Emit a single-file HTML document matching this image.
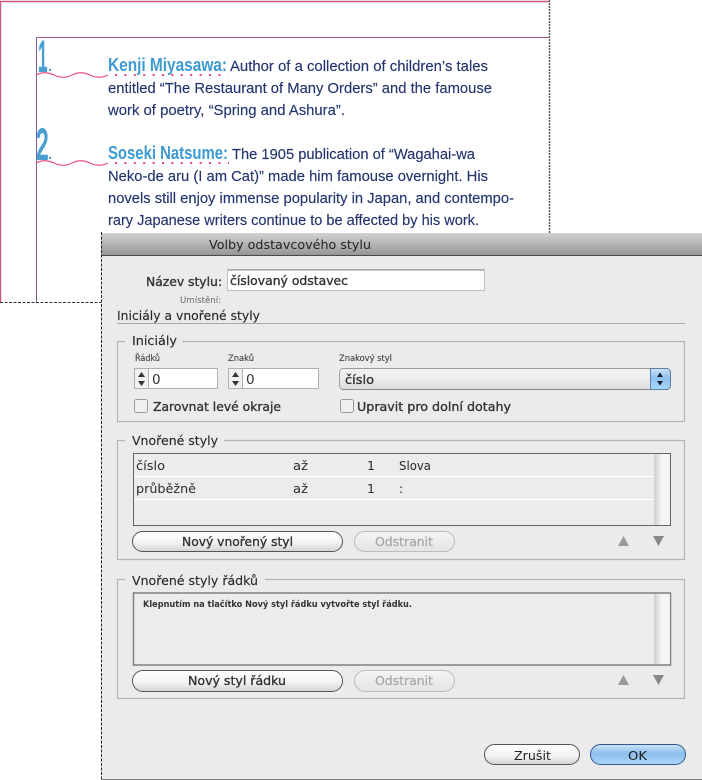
<!DOCTYPE html>
<html lang="cs">
<head>
<meta charset="utf-8">
<title>Volby odstavcového stylu</title>
<style>
html,body{margin:0;padding:0;background:#fff;width:702px;height:780px;overflow:hidden}
svg{display:block;filter:blur(.3px)}
.b{font-family:"Liberation Sans",sans-serif;font-size:15px;fill:#24356f;stroke:#24356f;stroke-width:.15}
.h{font-family:"Liberation Sans",sans-serif;font-weight:bold;font-size:18px;fill:#3d9ad2}
.n{font-family:"Liberation Sans",sans-serif;fill:#4a9fd0;stroke:#4a9fd0;stroke-width:2}
.p{font-family:"Liberation Sans",sans-serif;font-weight:bold;font-size:15px;fill:#4a9fd0}
.u{font-family:"DejaVu Sans",sans-serif;font-size:12.5px;fill:#2b2b2b}
.s{font-family:"DejaVu Sans",sans-serif;font-size:8.5px;fill:#3f3f3f;stroke:#3f3f3f;stroke-width:.12}
.m{font-family:"DejaVu Sans",sans-serif;font-size:12.5px;fill:#333;stroke:#333;stroke-width:.35}
.d{font-family:"DejaVu Sans",sans-serif;font-size:12.5px;fill:#a6a6a6;stroke:#a6a6a6;stroke-width:.2}
</style>
</head>
<body>
<svg width="702" height="780" viewBox="0 0 702 780" xmlns="http://www.w3.org/2000/svg">
<defs>
<linearGradient id="tb" x1="0" y1="0" x2="0" y2="1"><stop offset="0" stop-color="#d2d2d2"/><stop offset="1" stop-color="#969696"/></linearGradient>
<linearGradient id="pill" x1="0" y1="0" x2="0" y2="1"><stop offset="0" stop-color="#ffffff"/><stop offset=".55" stop-color="#f3f3f3"/><stop offset="1" stop-color="#d4d4d4"/></linearGradient>
<linearGradient id="pilld" x1="0" y1="0" x2="0" y2="1"><stop offset="0" stop-color="#f4f4f4"/><stop offset="1" stop-color="#e4e4e4"/></linearGradient>
<linearGradient id="blue" x1="0" y1="0" x2="0" y2="1"><stop offset="0" stop-color="#cfe4f8"/><stop offset=".45" stop-color="#8dbfee"/><stop offset="1" stop-color="#a9d8fa"/></linearGradient>
<linearGradient id="sel" x1="0" y1="0" x2="0" y2="1"><stop offset="0" stop-color="#f2f2f2"/><stop offset=".5" stop-color="#ececec"/><stop offset="1" stop-color="#dcdcdc"/></linearGradient>
<linearGradient id="sb" x1="0" y1="0" x2="1" y2="0"><stop offset="0" stop-color="#cfcfcf"/><stop offset=".5" stop-color="#f6f6f6"/><stop offset="1" stop-color="#f2f2f2"/></linearGradient>
</defs>

<!-- page behind the dialog -->
<line x1="0" y1="1.5" x2="549" y2="1.5" stroke="#d0587a" stroke-width="1.4"/>
<line x1="0.5" y1="1" x2="0.5" y2="302" stroke="#d0587a" stroke-width="1.4"/>
<line x1="549.5" y1="0" x2="549.5" y2="233" stroke="#555" stroke-width="1.4" stroke-dasharray="2 1"/>
<line x1="0" y1="302.5" x2="101" y2="302.5" stroke="#333" stroke-width="1" stroke-dasharray="3 1.5"/>
<line x1="36" y1="37.5" x2="549" y2="37.5" stroke="#a2588f" stroke-width="1"/>
<line x1="36.5" y1="37" x2="36.5" y2="302" stroke="#7d5ba6" stroke-width="1"/>

<text class="n" font-size="43" transform="translate(38 71) scale(.4 1)">1</text>
<text class="p" x="48" y="71">.</text>
<text class="n" font-size="43" transform="translate(36 159) scale(.52 1)">2</text>
<text class="p" x="48" y="159">.</text>

<path d="M36 75c6-3 12-3 18 0s12 3 18 0 12-3 18 0 12 3 18 0" fill="none" stroke="#e8507f" stroke-width="1.2"/>
<path d="M36 163c6-3 12-3 18 0s12 3 18 0 12-3 18 0 12 3 18 0" fill="none" stroke="#e8507f" stroke-width="1.2"/>
<line x1="115" y1="75" x2="228" y2="75" stroke="#e8457a" stroke-width="2" stroke-dasharray="2 7.4"/>
<line x1="115" y1="163" x2="229" y2="163" stroke="#e8457a" stroke-width="2" stroke-dasharray="2 7.4"/>

<text class="h" x="108" y="71" textLength="119" lengthAdjust="spacingAndGlyphs">Kenji Miyasawa:</text>
<text class="b" x="230" y="71" textLength="258" lengthAdjust="spacingAndGlyphs">Author of a collection of children’s tales</text>
<text class="b" x="108" y="93" textLength="384" lengthAdjust="spacingAndGlyphs">entitled “The Restaurant of Many Orders” and the famouse</text>
<text class="b" x="108" y="115" textLength="237" lengthAdjust="spacingAndGlyphs">work of poetry, “Spring and Ashura”.</text>
<text class="h" x="108" y="159" textLength="120" lengthAdjust="spacingAndGlyphs">Soseki Natsume:</text>
<text class="b" x="232" y="159" textLength="243" lengthAdjust="spacingAndGlyphs">The 1905 publication of “Wagahai-wa</text>
<text class="b" x="108" y="181" textLength="380" lengthAdjust="spacingAndGlyphs">Neko-de aru (I am Cat)” made him famouse overnight. His</text>
<text class="b" x="108" y="203" textLength="406" lengthAdjust="spacingAndGlyphs">novels still enjoy immense popularity in Japan, and contempo-</text>
<text class="b" x="108" y="225" textLength="371" lengthAdjust="spacingAndGlyphs">rary Japanese writers continue to be affected by his work.</text>

<!-- dialog -->
<rect x="101" y="233" width="601" height="547" fill="#ebebeb"/>
<rect x="101" y="233" width="601" height="22" fill="url(#tb)"/>
<line x1="101" y1="255.5" x2="702" y2="255.5" stroke="#4a4a4a" stroke-width="1"/>
<line x1="101.5" y1="232" x2="101.5" y2="780" stroke="#222" stroke-width="1" stroke-dasharray="3 1.5"/>
<line x1="102" y1="779.5" x2="702" y2="779.5" stroke="#777" stroke-width="1"/>
<text class="u" x="209" y="249" textLength="162" lengthAdjust="spacingAndGlyphs" style="fill:#222">Volby odstavcového stylu</text>

<text class="m" x="146" y="286" textLength="76" lengthAdjust="spacingAndGlyphs">Název stylu:</text>
<rect x="227.5" y="269.5" width="257" height="21" fill="#fff" stroke="#c0c0c0"/>
<line x1="228" y1="270" x2="484" y2="270" stroke="#8e8e8e"/>
<text class="m" x="230" y="285" textLength="118" lengthAdjust="spacingAndGlyphs">číslovaný odstavec</text>
<text class="s" x="180" y="303" textLength="41" lengthAdjust="spacingAndGlyphs" style="fill:#777;stroke:#777">Umístění:</text>
<text class="u" x="117" y="320" textLength="143" lengthAdjust="spacingAndGlyphs" style="stroke:#2b2b2b;stroke-width:.15">Iniciály a vnořené styly</text>
<line x1="117" y1="323.5" x2="685" y2="323.5" stroke="#a8a8a8"/>

<!-- group 1 -->
<path d="M125 341.5H117.5V421.5H684.5V341.5H182" fill="none" stroke="#b4b4b4" stroke-width="1.2"/>
<text class="u" x="132" y="345" textLength="45" lengthAdjust="spacingAndGlyphs" style="stroke:#2b2b2b;stroke-width:.15">Iniciály</text>
<text class="s" x="135" y="361" textLength="25" lengthAdjust="spacingAndGlyphs">Řádků</text>
<text class="s" x="228" y="361" textLength="26" lengthAdjust="spacingAndGlyphs">Znaků</text>
<text class="s" x="339" y="361" textLength="53" lengthAdjust="spacingAndGlyphs">Znakový styl</text>

<rect x="134.5" y="368.5" width="83" height="20" fill="#fff" stroke="#b0b0b0"/>
<rect x="134.5" y="368.5" width="14" height="20" fill="#f0f0f0" stroke="#b0b0b0"/>
<path d="M138 377L141.500 372 145 377ZM138 381L141.500 386 145 381Z" fill="#333"/>
<text class="u" x="152" y="384" style="font-size:13.5px;fill:#333">0</text>
<rect x="228.500" y="368.5" width="90" height="20" fill="#fff" stroke="#b0b0b0"/>
<rect x="228.500" y="368.5" width="14" height="20" fill="#f0f0f0" stroke="#b0b0b0"/>
<path d="M232 377L235.500 372 239 377ZM232 381L235.500 386 239 381Z" fill="#333"/>
<text class="u" x="246" y="384" style="font-size:13.5px;fill:#333">0</text>

<rect x="339.500" y="368.500" width="331" height="21" rx="4" fill="url(#sel)" stroke="#a0a0a0"/>
<line x1="342" y1="368.500" x2="668" y2="368.500" stroke="#999"/>
<line x1="342" y1="389.500" x2="668" y2="389.500" stroke="#888"/>
<path d="M650.500 368.500H666.500a4 4 0 0 1 4 4V385.500a4 4 0 0 1-4 4H650.500Z" fill="url(#blue)" stroke="#5d7fa8"/>
<path d="M657 377L660 372.500 663 377ZM657 381L660 385.500 663 381Z" fill="#123"/>
<text class="m" x="345" y="384" textLength="29" lengthAdjust="spacingAndGlyphs">číslo</text>

<rect x="134.500" y="399.500" width="13" height="13" rx="2" fill="#f0f0f0" stroke="#9a9a9a"/>
<text class="m" x="153" y="411" textLength="128" lengthAdjust="spacingAndGlyphs">Zarovnat levé okraje</text>
<rect x="340.500" y="399.500" width="13" height="13" rx="2" fill="#f0f0f0" stroke="#9a9a9a"/>
<text class="m" x="357" y="411" textLength="154" lengthAdjust="spacingAndGlyphs">Upravit pro dolní dotahy</text>

<!-- group 2 -->
<path d="M125 440.500H117.500V559.500H684.500V440.500H224" fill="none" stroke="#b4b4b4" stroke-width="1.2"/>
<text class="u" x="132" y="445" textLength="86" lengthAdjust="spacingAndGlyphs" style="stroke:#2b2b2b;stroke-width:.15">Vnořené styly</text>
<rect x="133.500" y="453.500" width="537" height="72" fill="#ececec" stroke="#666"/>
<rect x="654" y="454" width="16" height="71" fill="url(#sb)"/>
<line x1="134" y1="476.500" x2="654" y2="476.500" stroke="#fff"/>
<line x1="134" y1="499.500" x2="654" y2="499.500" stroke="#fff"/>
<text class="u" x="136" y="470" textLength="29" lengthAdjust="spacingAndGlyphs">číslo</text>
<text class="u" x="293" y="470" textLength="15" lengthAdjust="spacingAndGlyphs">až</text>
<text class="u" x="367" y="470">1</text>
<text class="u" x="399" y="470" textLength="32" lengthAdjust="spacingAndGlyphs">Slova</text>
<text class="u" x="136" y="493" textLength="60" lengthAdjust="spacingAndGlyphs">průběžně</text>
<text class="u" x="293" y="493" textLength="15" lengthAdjust="spacingAndGlyphs">až</text>
<text class="u" x="367" y="493">1</text>
<text class="u" x="399" y="493">:</text>

<rect x="132.500" y="531.500" width="210" height="20" rx="10" fill="url(#pill)" stroke="#555"/>
<text class="m" x="182" y="546" textLength="111" lengthAdjust="spacingAndGlyphs">Nový vnořený styl</text>
<rect x="354.500" y="531.500" width="100" height="20" rx="10" fill="url(#pilld)" stroke="#bcbcbc"/>
<text class="d" x="375" y="546" textLength="58" lengthAdjust="spacingAndGlyphs">Odstranit</text>
<path d="M618 546L623.500 536 629 546Z" fill="#999"/>
<path d="M653 536L658.500 546 664 536Z" fill="#888"/>

<!-- group 3 -->
<path d="M125 579.500H117.500V698.500H684.500V579.500H265" fill="none" stroke="#b4b4b4" stroke-width="1.2"/>
<text class="u" x="132" y="585" textLength="126" lengthAdjust="spacingAndGlyphs" style="stroke:#2b2b2b;stroke-width:.15">Vnořené styly řádků</text>
<rect x="133.500" y="593" width="537" height="72" fill="#ececec" stroke="#808080" stroke-width="1.500"/>
<rect x="654" y="594" width="16" height="70" fill="url(#sb)"/>
<text class="s" x="143" y="607" textLength="269" lengthAdjust="spacingAndGlyphs" style="font-weight:bold;fill:#333;stroke:none">Klepnutím na tlačítko Nový styl řádku vytvořte styl řádku.</text>

<rect x="132.500" y="670.500" width="210" height="21" rx="10.500" fill="url(#pill)" stroke="#555"/>
<text class="m" x="188" y="685" textLength="98" lengthAdjust="spacingAndGlyphs">Nový styl řádku</text>
<rect x="354.500" y="670.500" width="100" height="21" rx="10.500" fill="url(#pilld)" stroke="#bcbcbc"/>
<text class="d" x="375" y="685" textLength="58" lengthAdjust="spacingAndGlyphs">Odstranit</text>
<path d="M618 685L623.500 675 629 685Z" fill="#999"/>
<path d="M653 675L658.500 685 664 675Z" fill="#888"/>

<!-- footer buttons -->
<rect x="484.500" y="744.500" width="95" height="20" rx="10" fill="url(#pill)" stroke="#555"/>
<text class="u" x="514" y="760" textLength="37" lengthAdjust="spacingAndGlyphs" style="fill:#222">Zrušit</text>
<rect x="590.500" y="744.500" width="95" height="20" rx="10" fill="url(#blue)" stroke="#35588a"/>
<text class="u" x="628" y="760" textLength="19" lengthAdjust="spacingAndGlyphs" style="fill:#1a1a1a">OK</text>
</svg>
</body>
</html>
